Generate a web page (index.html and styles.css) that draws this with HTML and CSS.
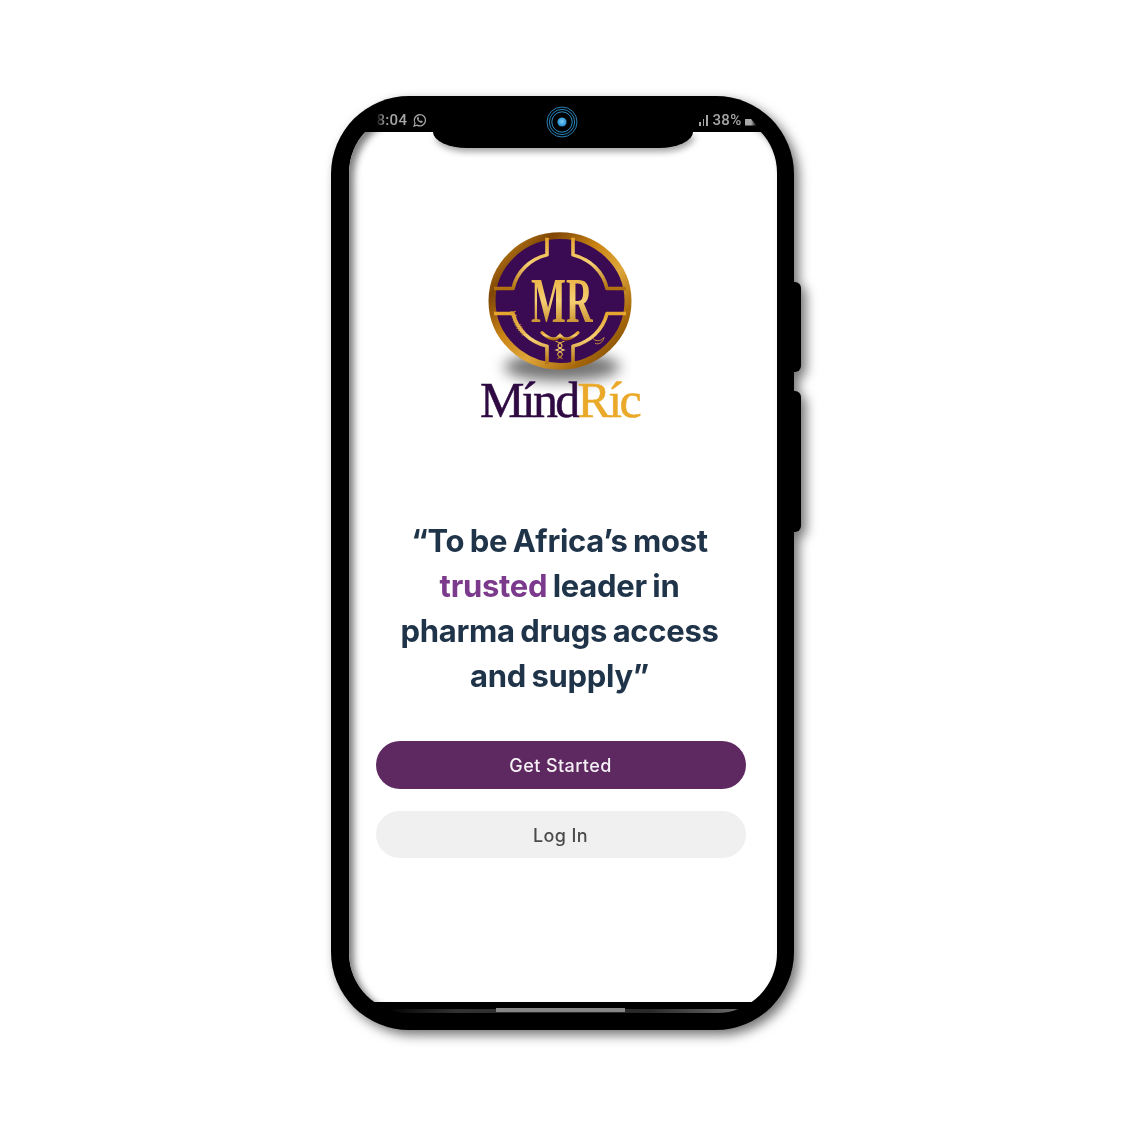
FILE: index.html
```html
<!DOCTYPE html>
<html lang="en">
<head>
<meta charset="utf-8">
<title>MindRic</title>
<link rel="stylesheet" href="styles.css">
</head>
<body>
<main class="stage">
  <div class="phone">
    <span class="side-key side-key-top"></span>
    <span class="side-key side-key-bottom"></span>
    <div class="status-bar">
      <div class="status-group">
        <span>8:04</span>
        <svg class="status-whatsapp" viewBox="0 0 16 16" width="15" height="15" aria-hidden="true">
          <path d="M2.2 14l1-3.3A6 6 0 1 1 5.500 13z" fill="none" stroke="#a5a5a5" stroke-width="1.400"/>
          <path d="M5.600 4.800c-.9 1 .1 3 1.500 4.200 1.400 1.300 3 1.900 3.900 1l.5-1.200-1.800-.9-.7.700c-.9-.3-1.700-1.100-2.100-2l.6-.8-.8-1.800z" fill="#a5a5a5"/>
        </svg>
      </div>
      <div class="status-group status-group-right">
        <span class="signal"><i class="bar bar-1"></i><i class="bar bar-2"></i><i class="bar bar-3"></i></span>
        <span>38%</span>
        <span class="battery"></span>
      </div>
    </div>
    <div class="notch">
      <svg class="camera" viewBox="0 0 32 32" width="32" height="32" aria-hidden="true">
        <defs>
          <radialGradient id="lens" cx="50%" cy="45%" r="55%">
            <stop offset="0" stop-color="#7fd0f7"/>
            <stop offset="1" stop-color="#1d86cc"/>
          </radialGradient>
        </defs>
        <g fill="none" stroke="#2a8fc9">
          <circle cx="16" cy="16" r="15" stroke-width=".9"/>
          <circle cx="16" cy="16" r="12.6" stroke-width=".9"/>
          <circle cx="16" cy="16" r="10.2" stroke-width="1"/>
        </g>
        <circle cx="16" cy="16" r="4.6" fill="url(#lens)"/>
      </svg>
    </div>
    <div class="display">
      <section class="screen">
        <div class="brand">
          <svg class="emblem" viewBox="-82 -70 164 164" width="164" height="164" role="img" aria-label="MindRic emblem">
            <defs>
              <linearGradient id="gold" x1="0" y1="0" x2="1" y2="1">
                <stop offset="0" stop-color="#d9981f"/>
                <stop offset=".22" stop-color="#7f4606"/>
                <stop offset=".42" stop-color="#c98414"/>
                <stop offset=".6" stop-color="#dfa63a"/>
                <stop offset=".8" stop-color="#a7680b"/>
                <stop offset="1" stop-color="#6f4006"/>
              </linearGradient>
              <linearGradient id="goldSoft" x1="0" y1="0" x2="0" y2="1">
                <stop offset="0" stop-color="#e5a52e"/>
                <stop offset=".5" stop-color="#f6cf72"/>
                <stop offset="1" stop-color="#b0700e"/>
              </linearGradient>
              <filter id="blur" x="-40%" y="-100%" width="180%" height="300%">
                <feGaussianBlur stdDeviation="7"/>
              </filter>
            </defs>
            <ellipse class="emblem-shadow" cx="2" cy="66" rx="58" ry="14" filter="url(#blur)"/>
            <g transform="scale(1 .96)">
              <circle cx="0" cy="0" r="68" fill="#3a0a52" stroke="url(#gold)" stroke-width="7"/>
              <g fill="none" stroke="url(#goldSoft)" stroke-width="3.600" stroke-linejoin="round">
                <path d="M-13 -66V-48A46 46 0 0 0 -47 -13H-66"/>
                <path d="M13 -66V-48A46 46 0 0 1 47 -13H66"/>
                <path d="M-66 13H-47A46 46 0 0 0 -13 47V66"/>
                <path d="M66 13H47A46 46 0 0 1 13 47V66"/>
              </g>
              <text class="emblem-letters" transform="translate(-29 22) scale(.56 1)" x="0" y="0">MR</text>
              <g fill="none" stroke="url(#goldSoft)" stroke-linecap="round">
                <path d="M0 30V62" stroke-width="2.400"/>
                <path d="M-18 33C-10 41 -4 41 0 36C4 41 10 41 18 33" stroke-width="3.200"/>
                <path d="M-4 42C4 45 4 48 -4 51C4 54 4 56 -2 60M4 42C-4 45 -4 48 4 51C-4 54 -4 56 2 60" stroke-width="1.200"/>
              </g>
              <path id="scriptArc" d="M-50 10C-47 30 -34 44 -14 49" fill="none"/>
              <text class="emblem-script"><textPath href="#scriptArc">MindRic</textPath></text>
              <path d="M32 38c3 4 8 5 12 0c-1 5-5 8-9 6" fill="none" stroke="#d59a34" stroke-width=".9"/>
            </g>
          </svg>
          <p class="wordmark"><span class="wordmark-dark">Mínd</span><span class="wordmark-gold">Ríc</span></p>
        </div>
        <h1 class="mission">“To be Africa’s most<br><span class="mission-accent">trusted</span> leader in<br>pharma drugs access<br>and supply”</h1>
        <div class="actions">
          <a class="button button-primary">Get Started</a>
          <a class="button button-muted">Log In</a>
        </div>
      </section>
      <div class="home-strip"><span class="home-bar"></span></div>
    </div>
  </div>
</main>
</body>
</html>
```
FILE: styles.css
```css
* { box-sizing: border-box; }

html, body {
  margin: 0;
  height: 100%;
  overflow: hidden;
  background: #fff;
}

.stage {
  display: flex;
  justify-content: center;
  padding-top: 96px;
  padding-right: 1px;
}

.phone {
  position: relative;
  width: 463px;
  height: 934px;
  padding: 17px 17px 17px 18px;
  background: #000;
  border-radius: 78px;
  filter: drop-shadow(5px 5px 6px rgba(0, 0, 0, .55));
}

.side-key {
  position: absolute;
  left: 100%;
  width: 7px;
  background: #000;
  border-radius: 0 6px 6px 0;
}
.side-key-top { top: 186px; height: 90px; }
.side-key-bottom { top: 295px; height: 141px; }

.status-bar {
  position: absolute;
  top: 17px;
  left: 18px;
  right: 17px;
  z-index: 2;
  display: flex;
  justify-content: space-between;
  align-items: center;
  height: 19px;
  padding: 0 20px 5px 28px;
  color: #a5a5a5;
  font: 500 15px/1 Roboto, "Liberation Sans", sans-serif;
  letter-spacing: .3px;
  -webkit-mask-image: linear-gradient(90deg, transparent 27px, #000 36px, #000 calc(100% - 26px), transparent calc(100% - 20px));
  mask-image: linear-gradient(90deg, transparent 27px, #000 36px, #000 calc(100% - 26px), transparent calc(100% - 20px));
}
.status-group {
  display: flex;
  align-items: center;
  gap: 5px;
}
.status-group-right { gap: 3px; }
.status-whatsapp { display: block; }

.signal {
  display: flex;
  align-items: flex-end;
  gap: 2px;
  height: 11px;
  margin-right: 2px;
}
.bar { width: 1.500px; background: #a5a5a5; }
.bar-1 { height: 4px; }
.bar-2 { height: 7px; }
.bar-3 { height: 11px; }

.battery {
  width: 12px;
  height: 8px;
  margin-top: 3px;
  background: #aaa;
  clip-path: polygon(0 20%, 55% 20%, 100% 100%, 0 100%);
}

.notch {
  position: absolute;
  top: 36px;
  left: 102px;
  width: 260px;
  height: 16px;
  z-index: 3;
  background: #000;
  border-radius: 0 0 34px 34px / 0 0 16px 16px;
  box-shadow: 2px 4px 6px rgba(0, 0, 0, .35);
}

.camera {
  position: absolute;
  top: -26px;
  left: 113px;
}

.display {
  position: relative;
  display: flex;
  flex-direction: column;
  height: 100%;
  padding-top: 19px;
  overflow: hidden;
  background: #000;
  border-radius: 60px;
}
.display::after {
  content: "";
  position: absolute;
  inset: 0;
  border-radius: 60px;
  box-shadow: inset 5px 4px 7px rgba(0, 0, 0, .5);
  pointer-events: none;
}

.screen {
  display: flex;
  flex: 1;
  flex-direction: column;
  align-items: center;
  padding: 99px 31px 0 27px;
  background: #fff;
}

.brand {
  display: flex;
  flex-direction: column;
  align-items: center;
  height: 287px;
  margin-right: 2px;
}

.emblem {
  display: block;
  flex: none;
  overflow: visible;
}
.emblem-shadow { fill: rgba(0, 0, 0, .55); }
.emblem-letters {
  font: 700 66px "Liberation Serif", serif;
  fill: url(#goldSoft);
}
.emblem-script {
  font: italic 8px "Liberation Serif", serif;
  fill: #d59a34;
  letter-spacing: .5px;
}

.wordmark {
  margin: -18px 0 0;
  font: 400 50px/46px "Liberation Serif", serif;
  letter-spacing: -2.700px;
  white-space: nowrap;
  -webkit-text-stroke: .5px currentColor;
}
.wordmark-dark { color: #2f0a42; }
.wordmark-gold { color: #eba92a; }

.mission {
  margin: 0;
  width: 100%;
  padding-right: 2px;
  color: #1f3349;
  font: 700 31px/45px Inter, "Liberation Sans", sans-serif;
  letter-spacing: -.3px;
  word-spacing: -1.500px;
  text-align: center;
}
.mission-accent { color: #7c3a8c; }

.actions {
  display: flex;
  flex-direction: column;
  gap: 22px;
  width: 100%;
  margin-top: 43px;
}

.button {
  display: flex;
  justify-content: center;
  align-items: center;
  height: 48px;
  padding-top: 1px;
  border-radius: 24px;
  font: 500 18px/1 Inter, "Liberation Sans", sans-serif;
  letter-spacing: .4px;
}
.button-primary { background: #5e2860; color: #f5f0f5; }
.button-muted { height: 47px; padding-top: 2px; background: #f0f0f0; color: #4b4b4b; }

.home-strip {
  display: flex;
  flex: none;
  justify-content: center;
  align-items: flex-end;
  height: 11px;
  padding-bottom: 1px;
  background:
    linear-gradient(90deg, transparent 8%, #333 25%, #2a2a2a 70%, #6a6a6a 90%, transparent 93%) 0 100% / 100% 4px no-repeat;
}
.home-bar {
  width: 129px;
  height: 4px;
  margin-right: 5px;
  background: #8a8a8a;
}
```
